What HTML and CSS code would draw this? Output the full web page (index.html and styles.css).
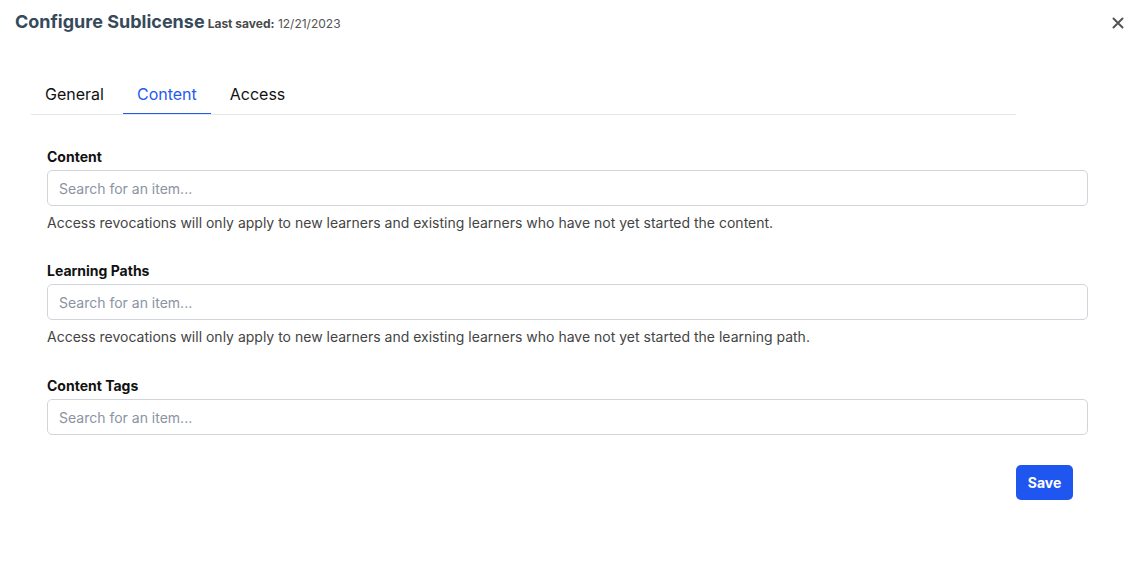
FILE: index.html
```html
<!DOCTYPE html>
<html lang="en">
<head>
<meta charset="utf-8">
<title>Configure Sublicense</title>
<link rel="stylesheet" href="styles.css">
</head>
<body>
<div class="modal">
  <header class="header">
    <div class="title-group">
      <h1 class="title">Configure Sublicense</h1>
      <span class="saved"><b>Last saved:</b> 12/21/2023</span>
    </div>
    <button class="close" aria-label="Close">
      <svg width="12" height="12" viewBox="0 0 12 12"><path d="M1.5 1.5 L10.5 10.5 M10.5 1.5 L1.5 10.5" stroke="#555" stroke-width="2" stroke-linecap="round"/></svg>
    </button>
  </header>

  <nav class="tabs">
    <div class="tab">General</div>
    <div class="tab active">Content</div>
    <div class="tab">Access</div>
  </nav>

  <main class="body">
    <section class="field">
      <label class="label">Content</label>
      <input class="input" type="text" placeholder="Search for an item...">
      <p class="help">Access revocations will only apply to new learners and existing learners who have not yet started the content.</p>
    </section>
    <section class="field field-paths">
      <label class="label">Learning Paths</label>
      <input class="input" type="text" placeholder="Search for an item...">
      <p class="help">Access revocations will only apply to new learners and existing learners who have not yet started the learning path.</p>
    </section>
    <section class="field field-last">
      <label class="label">Content Tags</label>
      <input class="input" type="text" placeholder="Search for an item...">
    </section>
    <div class="actions">
      <button class="save">Save</button>
    </div>
  </main>
</div>
</body>
</html>
```

FILE: styles.css
```css
* { box-sizing: border-box; }
html, body {
  margin: 0;
  padding: 0;
  background: #fff;
  font-family: Inter, "Liberation Sans", Arial, sans-serif;
  color: #111;
}
.modal {
  width: 1135px;
  height: 576px;
}
.header {
  display: flex;
  justify-content: space-between;
  align-items: center;
  padding: 10px 11px 0 15px;
}
.title-group {
  display: flex;
  align-items: baseline;
  gap: 3px;
}
.title {
  margin: 0;
  font-size: 18px;
  line-height: 24px;
  font-weight: 700;
  color: #364a5b;
}
.saved {
  font-size: 12px;
  color: #555;
}
.saved b {
  color: #4a4a4a;
  font-weight: 700;
}
.close {
  border: 0;
  background: transparent;
  padding: 0;
  width: 12px;
  height: 12px;
  display: flex;
  margin-top: 2px;
}
.tabs {
  display: flex;
  gap: 5px;
  margin: 41px 0 0 31px;
  width: 985px;
  border-bottom: 1px solid #e5e7eb;
}
.tab {
  padding: 8px 14px 7px;
  font-size: 16px;
  line-height: 24px;
  color: #111;
  border-bottom: 1px solid transparent;
  margin-bottom: -1px;
  position: relative;
  top: -1px;
}
.tab.active {
  color: #245af0;
  border-bottom-color: #245af0;
}
.body {
  padding: 32px 47px 0 47px;
}
.field {
  margin-bottom: 28px;
}
.field-paths {
  margin-bottom: 29px;
}
.field-last {
  margin-bottom: 30px;
}
.label {
  display: block;
  font-size: 14px;
  line-height: 20px;
  font-weight: 700;
  color: #111;
  margin-bottom: 3px;
}
.input {
  display: block;
  width: 100%;
  height: 36px;
  border: 1px solid #d1d5db;
  border-radius: 5px;
  padding: 0 11px;
  font-family: inherit;
  font-size: 14px;
  color: #111;
  background: #fff;
  outline: none;
}
.input::placeholder {
  color: #8b93a3;
}
.help {
  margin: 7px 0 0;
  font-size: 14px;
  line-height: 20px;
  color: #444;
}
.actions {
  display: flex;
  justify-content: flex-end;
  padding-right: 15px;
}
.save {
  width: 57px;
  height: 35px;
  border: 0;
  border-radius: 5px;
  background: #1f56f0;
  color: #fff;
  font-family: inherit;
  font-size: 14px;
  font-weight: 700;
  cursor: pointer;
}
```
